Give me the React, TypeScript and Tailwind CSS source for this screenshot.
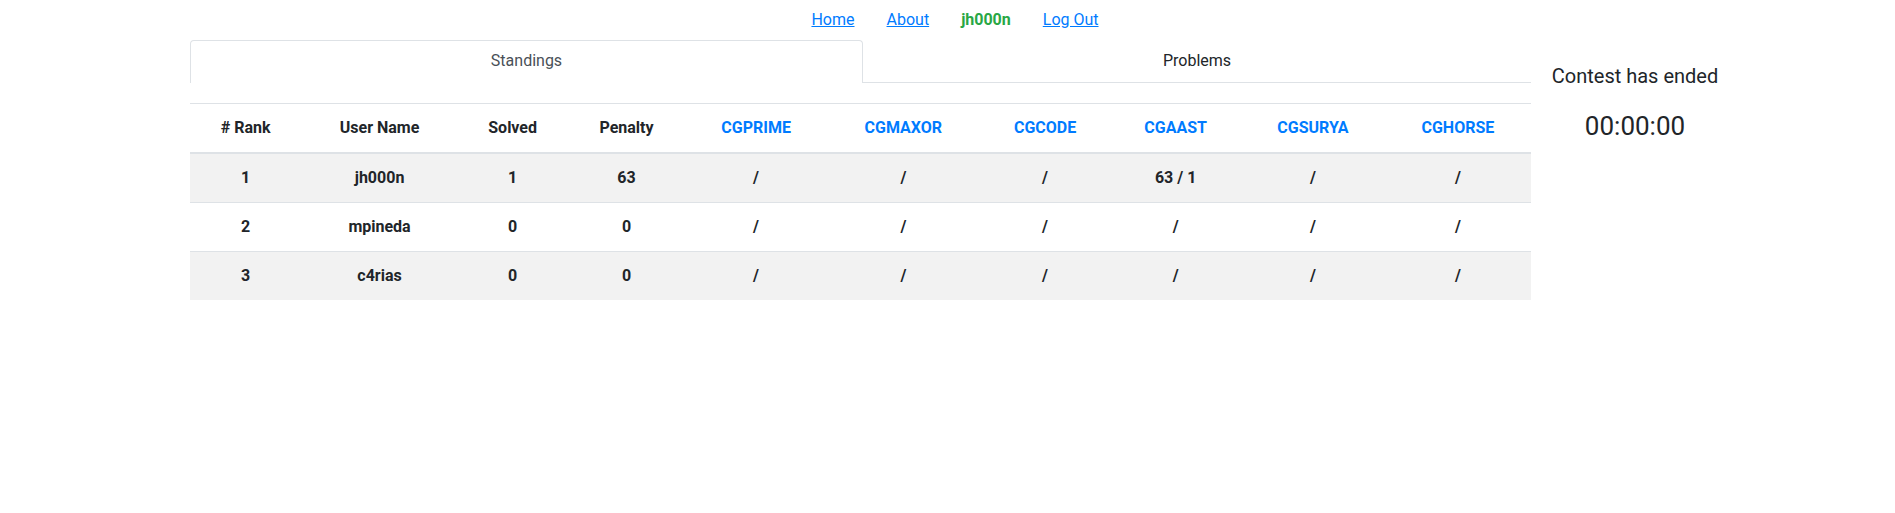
import React from 'react';

const PROBLEMS = ['CGPRIME', 'CGMAXOR', 'CGCODE', 'CGAAST', 'CGSURYA', 'CGHORSE'];

const ROWS = [
  { rank: 1, user: 'jh000n', solved: 1, penalty: 63, cells: ['/', '/', '/', '63 / 1', '/', '/'] },
  { rank: 2, user: 'mpineda', solved: 0, penalty: 0, cells: ['/', '/', '/', '/', '/', '/'] },
  { rank: 3, user: 'c4rias', solved: 0, penalty: 0, cells: ['/', '/', '/', '/', '/', '/'] },
];

const NavBar: React.FC = () => (
  <nav className="flex justify-center pt-2 pl-[15px]">
    <a href="#" className="px-4 text-[#007bff] underline leading-6">Home</a>
    <a href="#" className="px-4 text-[#007bff] underline leading-6">About</a>
    <span className="px-4 text-[#28a745] font-bold leading-6">jh000n</span>
    <a href="#" className="px-4 text-[#007bff] underline leading-6">Log Out</a>
  </nav>
);

const Tabs: React.FC = () => (
  <div className="flex border-b border-[#dee2e6]">
    <div className="w-[673px] text-center px-4 py-2 leading-6 text-[#495057] bg-white border border-[#dee2e6] border-b-0 rounded-t -mb-px">
      Standings
    </div>
    <div className="flex-1 text-center px-4 py-2 leading-6 text-[#212529] border border-transparent">
      Problems
    </div>
  </div>
);

const Standings: React.FC = () => (
  <table className="w-full mt-5 border-collapse text-center font-bold text-[#212529]">
    <thead>
      <tr>
        <th className="p-3 leading-6 border-t border-b-2 border-[#dee2e6]"># Rank</th>
        <th className="p-3 leading-6 border-t border-b-2 border-[#dee2e6]">User Name</th>
        <th className="p-3 leading-6 border-t border-b-2 border-[#dee2e6]">Solved</th>
        <th className="p-3 leading-6 border-t border-b-2 border-[#dee2e6]">Penalty</th>
        {PROBLEMS.map((p) => (
          <th key={p} className="p-3 leading-6 border-t border-b-2 border-[#dee2e6] text-[#007bff]">
            {p}
          </th>
        ))}
      </tr>
    </thead>
    <tbody>
      {ROWS.map((r, i) => (
        <tr key={r.rank} className={i % 2 === 0 ? 'bg-[#f2f2f2]' : 'bg-white'}>
          <td className="p-3 leading-6 border-t border-[#dee2e6]">{r.rank}</td>
          <td className="p-3 leading-6 border-t border-[#dee2e6]">{r.user}</td>
          <td className="p-3 leading-6 border-t border-[#dee2e6]">{r.solved}</td>
          <td className="p-3 leading-6 border-t border-[#dee2e6]">{r.penalty}</td>
          {r.cells.map((c, j) => (
            <td key={j} className="p-3 leading-6 border-t border-[#dee2e6]">{c}</td>
          ))}
        </tr>
      ))}
    </tbody>
  </table>
);

export default function App() {
  return (
    <div className="min-h-[513px] bg-white text-base text-[#212529]" style={{ fontFamily: 'Roboto, "Liberation Sans", sans-serif' }}>
      <NavBar />
      <div className="flex pl-[190px] mt-2">
        <div className="w-[1341px]">
          <Tabs />
          <Standings />
        </div>
        <div className="w-[208px] text-center pt-6">
          <h5 className="text-xl leading-6 font-normal">Contest has ended</h5>
          <h4 className="text-[26px] leading-8 mt-[22px] font-normal">00:00:00</h4>
        </div>
      </div>
    </div>
  );
}
